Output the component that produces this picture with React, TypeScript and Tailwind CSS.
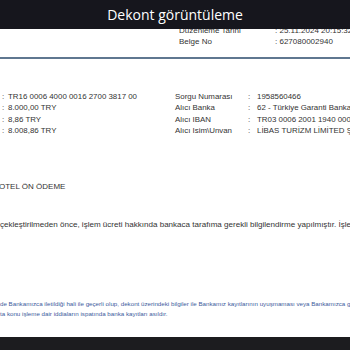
import React from "react";

const doc = { fontFamily: '"Liberation Sans", Arial, sans-serif' };

function Row({ label, value, lx, cx }: { label: string; value: string; lx: string; cx: string }) {
  return (
    <div className="flex h-[11.5px] items-center whitespace-nowrap">
      {label !== "" && <span className={lx}>{label}</span>}
      <span className={cx}>:</span>
      <span>{value}</span>
    </div>
  );
}

export default function App() {
  return (
    <div className="relative h-[350px] w-[350px] overflow-hidden bg-white text-[#222]" style={doc}>
      <div className="flex flex-col">
        <div className="pt-[25px] pl-[179px] text-[8px] text-[#333]">
          <div className="flex h-[11px] items-center whitespace-nowrap">
            <span className="w-[96px] shrink-0">Düzenleme Tarihi</span>
            <span>: 25.11.2024 20:15:32</span>
          </div>
          <div className="flex h-[11px] items-center whitespace-nowrap">
            <span className="w-[96px] shrink-0">Belge No</span>
            <span>: 627080002940</span>
          </div>
        </div>
        <div className="mt-[10px] h-[2px] w-full bg-[#5f7790]" />
        <div className="mt-[32px] flex text-[7.9px] text-[#333]">
          <div className="flex w-[175px] shrink-0 flex-col pl-[2px]">
            <Row label="" value="TR16 0006 4000 0016 2700 3817 00" lx="" cx="w-[6px]" />
            <Row label="" value="8.000,00 TRY" lx="" cx="w-[6px]" />
            <Row label="" value="8,86 TRY" lx="" cx="w-[6px]" />
            <Row label="" value="8.008,86 TRY" lx="" cx="w-[6px]" />
          </div>
          <div className="flex flex-1 flex-col">
            <Row label="Sorgu Numarası" value="1958560466" lx="w-[73px] shrink-0" cx="w-[9px] shrink-0" />
            <Row label="Alıcı Banka" value="62 - Türkiye Garanti Bankası A.Ş." lx="w-[73px] shrink-0" cx="w-[9px] shrink-0" />
            <Row label="Alıcı IBAN" value="TR03 0006 2001 1940 0006 2967 42" lx="w-[73px] shrink-0" cx="w-[9px] shrink-0" />
            <Row label="Alıcı Isim\Unvan" value="LİBAS TURİZM LİMİTED ŞİRKETİ" lx="w-[73px] shrink-0" cx="w-[9px] shrink-0" />
          </div>
        </div>
        <div className="mt-[44px] -ml-[1px] whitespace-nowrap text-[8px] text-[#333]">OTEL ÖN ÖDEME</div>
        <div className="mt-[26px] whitespace-nowrap text-[8.05px] text-[#333]">
          çekleştirilmeden önce, işlem ücreti hakkında bankaca tarafıma gerekli bilgilendirme yapılmıştır. İşlem ücreti
        </div>
        <div className="mt-[68px] whitespace-nowrap text-[6.2px] leading-[10px] text-[#3d5b9c]">
          <div>de Bankamızca iletildiği hali ile geçerli olup, dekont üzerindeki bilgiler ile Bankamız kayıtlarının uyuşmaması veya Bankamızca gönderilen</div>
          <div>ta konu işleme dair iddiaların ispatında banka kayıtları asıldır.</div>
        </div>
      </div>
      <div className="absolute inset-x-0 top-0 flex h-[29px] items-center justify-center bg-[#16161d]">
        <span className="text-[14px] font-medium text-white" style={{ fontFamily: '"Open Sans", sans-serif' }}>
          Dekont görüntüleme
        </span>
      </div>
      <div className="absolute inset-x-0 bottom-0 h-[13px] bg-[#1c1c1f]" />
    </div>
  );
}
